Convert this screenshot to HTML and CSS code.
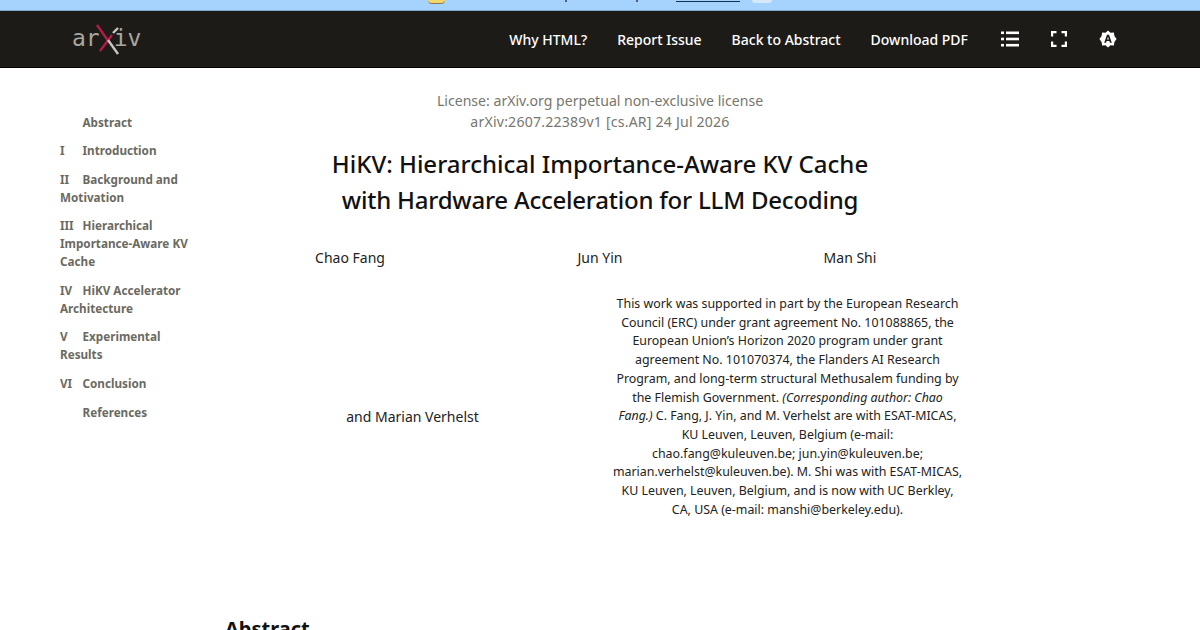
FILE: index.html
```html
<!DOCTYPE html>
<html lang="en">
<head>
<meta charset="utf-8">
<title>HiKV</title>
<link rel="stylesheet" href="styles.css">
</head>
<body>
<div class="strip">
  <span class="strip-emoji"></span>
  <span class="strip-tick tick-a"></span>
  <span class="strip-tick tick-b"></span>
  <span class="strip-link"></span>
  <span class="strip-btn"></span>
</div>
<header class="nav">
  <a class="logo">
    <span>ar</span>
    <svg class="logo-x" width="24" height="32" viewBox="0 0 24 32" aria-hidden="true">
      <path d="M1 2 L13 19" stroke="#b31b4b" stroke-width="2.400" fill="none"/>
      <path d="M4 28 L16 12" stroke="#b31b4b" stroke-width="2.400" fill="none"/>
      <path d="M12 17 L22 31" stroke="#c9c6bd" stroke-width="2.400" fill="none"/>
      <path d="M17 10 L22 5" stroke="#c9c6bd" stroke-width="2.400" fill="none"/>
    </svg>
    <span>iv</span>
  </a>
  <nav class="nav-links">
    <a>Why HTML?</a>
    <a>Report Issue</a>
    <a>Back to Abstract</a>
    <a>Download PDF</a>
  </nav>
  <div class="nav-icons">
    <svg width="18" height="18" viewBox="0 0 18 18" aria-hidden="true">
      <g fill="#fff">
        <rect x="0" y="1.500" width="3" height="2.600"/><rect x="5" y="1.500" width="13" height="2.600"/>
        <rect x="0" y="7.700" width="3" height="2.600"/><rect x="5" y="7.700" width="13" height="2.600"/>
        <rect x="0" y="13.900" width="3" height="2.600"/><rect x="5" y="13.900" width="13" height="2.600"/>
      </g>
    </svg>
    <svg width="16" height="16" viewBox="0 0 16 16" aria-hidden="true">
      <path d="M1.100 5.500V1.100H5.500M10.500 1.100h4.400V5.500M14.900 10.500v4.400H10.500M5.500 14.900H1.100V10.500" fill="none" stroke="#fff" stroke-width="2.200"/>
    </svg>
    <svg width="18" height="18" viewBox="0 0 18 18" aria-hidden="true">
      <path fill="#fff" fill-rule="evenodd" d="M9 .5l2.500 2.300 3.400-.2.500 3.300L17.600 9l-2.200 3.100-.5 3.300-3.400-.2L9 17.500l-2.500-2.300-3.400.2-.5-3.300L.4 9l2.200-3.100.5-3.300 3.400.2zM8 4.800L5.200 12.800h1.900l.5-1.700h2.800l.5 1.700h1.900L10 4.800zM8.100 9.500L9 6.700l.9 2.800z"/>
    </svg>
  </div>
</header>
<div class="page">
  <aside class="toc">
    <ol class="toc-list">
      <li class="toc-item"><span class="num"></span>Abstract</li>
      <li class="toc-item"><span class="num">I</span>Introduction</li>
      <li class="toc-item"><span class="num">II</span>Background and Motivation</li>
      <li class="toc-item"><span class="num">III</span>Hierarchical Importance-Aware KV Cache</li>
      <li class="toc-item"><span class="num">IV</span>HiKV Accelerator Architecture</li>
      <li class="toc-item"><span class="num">V</span>Experimental Results</li>
      <li class="toc-item"><span class="num">VI</span>Conclusion</li>
      <li class="toc-item"><span class="num"></span>References</li>
    </ol>
  </aside>
  <main class="paper">
    <div class="license">
      <div>License: arXiv.org perpetual non-exclusive license</div>
      <div class="license-id">arXiv:2607.22389v1 [cs.AR] 24 Jul 2026</div>
    </div>
    <h1 class="title">HiKV: Hierarchical Importance-Aware KV Cache<br><span class="title-tight">with Hardware Acceleration for LLM Decoding</span></h1>
    <div class="authors">
      <div class="author third">Chao Fang</div>
      <div class="author third">Jun Yin</div>
      <div class="author third">Man Shi</div>
      <div class="author half marian">and Marian Verhelst</div>
      <div class="half note">This work was supported in part by the European Research Council (ERC) under grant agreement No. 101088865, the European Union’s Horizon 2020 program under grant agreement No. 101070374, the Flanders AI Research Program, and long-term structural Methusalem funding by the Flemish Government. <em>(Corresponding author: Chao<br>Fang.)</em> C. Fang, J. Yin, and M. Verhelst are with ESAT-MICAS, KU Leuven, Leuven, Belgium (e-mail:<br>chao.fang@kuleuven.be; jun.yin@kuleuven.be; marian.verhelst@kuleuven.be). M. Shi was with ESAT-MICAS, KU Leuven, Leuven, Belgium, and is now with UC Berkley,<br>CA, USA (e-mail: manshi@berkeley.edu).</div>
    </div>
    <h2 class="abstract-head">Abstract</h2>
  </main>
</div>
</body>
</html>
```
FILE: styles.css
```css
* { box-sizing: border-box; }
html, body { margin: 0; height: 630px; overflow: hidden; background: #fff; }
body { font-family: "Noto Sans", sans-serif; color: #111; }

.strip { position: relative; height: 11px; background: #a6d3fd; border-bottom: 1px solid #7fa9cc; }
.strip-emoji { position: absolute; left: 428px; top: 0; width: 17px; height: 4px; background: #f3d66a; border-bottom: 1px solid #8a7a50; border-radius: 0 0 8px 8px; }
.strip-tick { position: absolute; top: 0; width: 2px; height: 2px; background: #4a5f78; }
.tick-a { left: 565px; }
.tick-b { left: 636px; }
.strip-link { position: absolute; left: 676px; top: 1px; width: 64px; height: 1px; background: #16304f; }
.strip-btn { position: absolute; left: 752px; top: 0; width: 20px; height: 3px; background: #d4e7fb; border-radius: 0 0 3px 3px; }

.nav { display: flex; align-items: center; height: 57px; background: #1d1b17; border-bottom: 1px solid #000; padding: 0 83px 0 72px; }
.logo { display: flex; align-items: center; font-family: "DejaVu Sans Mono", monospace; font-size: 23px; color: #aaa79f; line-height: 1; margin-top: -1px; }
.logo-x { margin: 1px -6px 0 -4px; }
.nav-links { display: flex; gap: 30px; margin-left: auto; font-size: 14px; font-weight: 500; color: #fff; }
.nav-icons { display: flex; align-items: center; gap: 32px; margin-left: 33px; }

.page { display: flex; }
.toc { width: 225px; flex: none; padding: 44.500px 0 0 60px; }
.toc-list { list-style: none; margin: 0; padding: 0; width: 135px; font-size: 11.700px; font-weight: 700; line-height: 18px; color: #6b6a62; }
.toc-item { margin-bottom: 10.600px; }
.num { display: inline-block; width: 22.500px; }

.paper { width: 750px; }
.license { margin-top: 22px; text-align: center; font-size: 14.100px; line-height: 21px; color: #77766e; }
.license-id { letter-spacing: .2px; }
.title { margin: 14px 0 0; text-align: center; font-size: 24px; font-weight: 500; line-height: 36px; color: #111; }
.title-tight { letter-spacing: -.23px; }
.authors { display: grid; grid-template-columns: repeat(6, 1fr); margin-top: 30px; }
.author { text-align: center; font-size: 14px; line-height: 20px; color: #222; }
.third { grid-column: span 2; }
.half { grid-column: span 3; }
.marian { align-self: center; margin-top: 46px; }
.note { margin-top: 27px; padding: 0 10px; text-align: center; font-size: 12.400px; line-height: 18.720px; color: #222; }
.abstract-head { margin: 96px 0 0; font-size: 20px; font-weight: 700; line-height: 26px; color: #111; }
```
